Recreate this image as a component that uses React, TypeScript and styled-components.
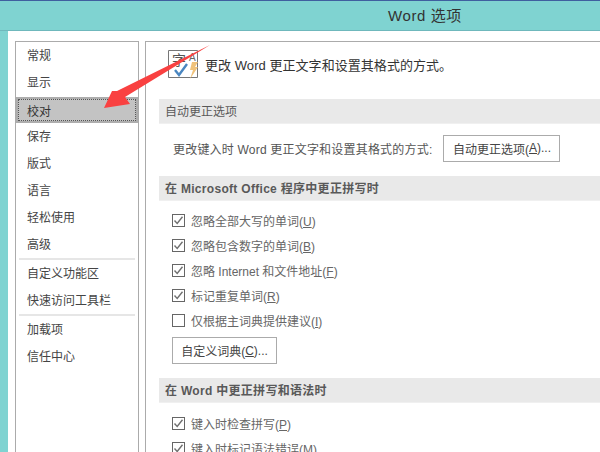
import React from "react";
import styled, { createGlobalStyle } from "styled-components";

const Global = createGlobalStyle`
  html, body { margin: 0; padding: 0; background: #fff; }
  body { font-family: "Liberation Sans", "Noto Sans CJK SC", sans-serif; }
  #root { width: 600px; height: 452px; overflow: hidden; }
`;
const Windows = styled.div`
  position: relative; width: 600px; height: 452px; overflow: hidden;
  display: flex; flex-direction: column; background: #7fd3d1; border-top: 1px solid #3f5f9f;
`;
const TitleBar = styled.div`
  height: 30px; box-sizing: border-box; flex: none; display: flex; align-items: center; padding: 0 0 2px 388px;
  font-size: 15px; color: #333; border-bottom: 1px solid #6fb8bc; letter-spacing: 0.6px;
`;
const Body = styled.div`
  flex: 1; min-height: 0; margin-left: 8px; background: #fff; padding: 10px 0 0 7px;
  display: flex; gap: 6px;
`;
const Nav = styled.nav`
  width: 122px; flex: none; border: 1px solid #ababab; border-bottom: none;
  display: flex; flex-direction: column; align-items: stretch;
`;
const NavItem = styled.div<{ $active?: boolean }>`
  height: 27px; box-sizing: border-box; display: flex; align-items: center; padding: 0 0 2px 11px;
  font-size: 12px; color: #444;
  ${(p) => p.$active && `
    height: 26px; margin-top: 1px; padding: 0 0 0 9px;
    background: #c3c3c3; color: #333; border: 2px solid #adadad; outline: 1px dotted #555;
    outline-offset: -3px;
  `}
`;
const NavSep = styled.div`
  height: 2px; margin: 0 3px; background: #e6e6e6;
`;
const Main = styled.main`
  flex: 1; min-width: 0; border: 1px solid #ababab; border-right: none; border-bottom: none;
  padding: 0 0 0 13px; display: flex; flex-direction: column;
`;
const Heading = styled.div`
  height: 57px; flex: none; padding: 8px 0 0 9px; box-sizing: border-box;
  display: flex; align-items: flex-start; gap: 5px; font-size: 13px; color: #333;
`;
const HeadingText = styled.span` margin-top: 5px; letter-spacing: 0.05px; `;
const Section = styled.div`
  height: 25px; flex: none; background: #e9e9e9; display: flex; align-items: center; box-sizing: border-box;
  padding: 0 0 2px 6px; font-size: 12px; color: #595959; border-bottom: 1px solid #f0f0f0;
`;
const BoldSection = styled(Section)` font-weight: 700; letter-spacing: 0.3px; padding-bottom: 1px; `;
const CorrectRow = styled.div`
  height: 52px; flex: none; display: flex; align-items: center; padding: 0 0 4px 14px; box-sizing: border-box; gap: 11px;
  font-size: 12px; color: #555; letter-spacing: 0.2px;
`;
const Btn = styled.div`
  box-sizing: border-box; height: 27px; display: inline-flex; align-items: center; justify-content: center;
  border: 1px solid #ababab; background: #fff; font-size: 12px; color: #444; letter-spacing: 0;
`;
const AutoBtn = styled(Btn)` width: 117px; `;
const CheckList = styled.div<{ $top: number }>`
  display: flex; flex-direction: column; padding: ${(p) => p.$top}px 0 0 13px; flex: none;
`;
const CheckRow = styled.div`
  height: 25px; flex: none; display: flex; align-items: center; gap: 6px; font-size: 12px; color: #666;
`;
const Box = styled.div`
  width: 13px; height: 13px; box-sizing: border-box; border: 1px solid #666; background: #fff;
  display: flex; align-items: center; justify-content: center; flex: none;
`;
const DictBtn = styled(Btn)` width: 105px; margin: 4px 0 14px; `;
const U = styled.span` text-decoration: underline; text-underline-offset: 1px; `;
const Overlay = styled.svg` position: absolute; left: 0; top: 0; pointer-events: none; `;
const Tick = () => (
  <svg width="11" height="11" viewBox="0 0 11 11"><path d="M1.5 5.5 L4.2 8.5 L9.5 1.8" fill="none" stroke="#707070" strokeWidth="1.4" /></svg>
);
const Check = ({ on = true, children }: { on?: boolean; children: React.ReactNode }) => (
  <CheckRow><Box>{on && <Tick />}</Box><span>{children}</span></CheckRow>
);
const ProofIcon = () => (
  <svg width="32" height="30" viewBox="0 0 32 30">
    <path d="M0.5 0.5 H29.5 V27.5 H0.5 Z" fill="#fff" stroke="#777" strokeWidth="1" />
    <text x="4" y="15" fontSize="14" fill="#555" fontFamily="Noto Sans CJK SC">字</text>
    <text x="21" y="11" fontSize="10" fill="#666" fontFamily="Liberation Sans">A</text>
    <path d="M7 20 L11 25 L19 14" fill="none" stroke="#4a86c0" strokeWidth="2.4" />
    <path d="M24 12 H30 L27 17 H30 L22 29 L25 20 H22 Z" fill="#f0c27a" />
  </svg>
);
export default function App() {
  return (
    <Windows>
      <Global />
      <TitleBar>Word 选项</TitleBar>
      <Body>
        <Nav>
          <NavItem>常规</NavItem>
          <NavItem>显示</NavItem>
          <NavItem $active>校对</NavItem>
          <NavItem>保存</NavItem>
          <NavItem>版式</NavItem>
          <NavItem>语言</NavItem>
          <NavItem>轻松使用</NavItem>
          <NavItem>高级</NavItem>
          <NavSep />
          <NavItem>自定义功能区</NavItem>
          <NavItem>快速访问工具栏</NavItem>
          <NavSep />
          <NavItem>加载项</NavItem>
          <NavItem>信任中心</NavItem>
        </Nav>
        <Main>
          <Heading><ProofIcon /><HeadingText>更改 Word 更正文字和设置其格式的方式。</HeadingText></Heading>
          <Section>自动更正选项</Section>
          <CorrectRow>
            <span>更改键入时 Word 更正文字和设置其格式的方式:</span>
            <AutoBtn>自动更正选项(<U>A</U>)...</AutoBtn>
          </CorrectRow>
          <BoldSection>在 Microsoft Office 程序中更正拼写时</BoldSection>
          <CheckList $top={7}>
            <Check>忽略全部大写的单词(<U>U</U>)</Check>
            <Check>忽略包含数字的单词(<U>B</U>)</Check>
            <Check>忽略 Internet 和文件地址(<U>F</U>)</Check>
            <Check>标记重复单词(<U>R</U>)</Check>
            <Check on={false}>仅根据主词典提供建议(<U>I</U>)</Check>
            <DictBtn>自定义词典(<U>C</U>)...</DictBtn>
          </CheckList>
          <BoldSection>在 Word 中更正拼写和语法时</BoldSection>
          <CheckList $top={8}>
            <Check>键入时检查拼写(<U>P</U>)</Check>
            <Check>键入时标记语法错误(<U>M</U>)</Check>
          </CheckList>
        </Main>
      </Body>
      <Overlay width="600" height="452" viewBox="0 0 600 452">
        <path d="M210 44 L125 96 L130 103 L104 107 L112 90 L117 90 Z" fill="#f94141" />
      </Overlay>
    </Windows>
  );
}
